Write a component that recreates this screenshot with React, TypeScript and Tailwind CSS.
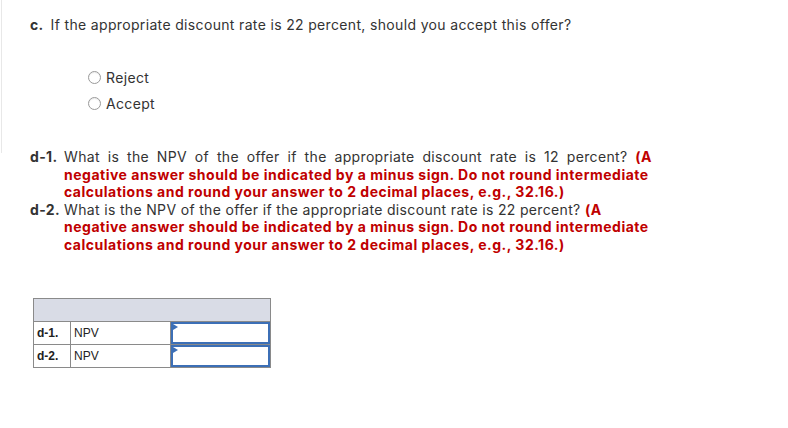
const Radio = ({ label }: { label: string }) => (
  <label className="flex items-center h-[26px] gap-[5px]">
    <span className="w-[13px] h-[13px] rounded-full border border-[#9a9a9a] bg-white shadow-[inset_0_1px_1px_rgba(0,0,0,0.08)]" />
    <span className="text-[14px] text-[#333]">{label}</span>
  </label>
);

const Red = ({ children }: { children: React.ReactNode }) => (
  <span className="font-bold tracking-[0.5px] text-[#c00000]">{children}</span>
);

const InputCell = () => (
  <td className="w-[100px] border border-[#8a8a8a] p-0">
    <div className="relative h-[22px] border-2 border-[#3c6fb6] bg-white">
      <span className="absolute left-0 top-0 w-0 h-0 border-y-[3px] border-y-transparent border-l-[5px] border-l-[#3c6fb6]" />
    </div>
  </td>
);

export default function App() {
  return (
    <div className="w-[788px] h-[428px] bg-white flex font-['Inter',sans-serif] tracking-[0.34px] text-[#333]">
      <div className="w-[2px] h-[153px] border-r border-[#e8e8e8]" />
      <div className="flex-1 pl-[28px] pt-[15px]">
        <p className="text-[14px] leading-[20px]">
          <span className="font-bold">c.</span>
          <span className="ml-[7px]">If the appropriate discount rate is 22 percent, should you accept this offer?</span>
        </p>

        <div className="mt-[29px] ml-[58px] flex flex-col">
          <Radio label="Reject" />
          <Radio label="Accept" />
        </div>

        <div className="mt-[32px] text-[14px] leading-[17.6px]">
          <div className="flex">
            <span className="w-[34px] font-bold">d-1.</span>
            <div className="w-[588px]">
              <div className="text-justify [text-align-last:justify]">
                What is the NPV of the offer if the appropriate discount rate is 12 percent? <Red>(A</Red>
              </div>
              <div><Red>negative answer should be indicated by a minus sign. Do not round intermediate</Red></div>
              <div><Red>calculations and round your answer to 2 decimal places, e.g., 32.16.)</Red></div>
            </div>
          </div>
          <div className="flex">
            <span className="w-[34px] font-bold">d-2.</span>
            <div className="w-[588px]">
              <div>
                What is the NPV of the offer if the appropriate discount rate is 22 percent? <Red>(A</Red>
              </div>
              <div><Red>negative answer should be indicated by a minus sign. Do not round intermediate</Red></div>
              <div><Red>calculations and round your answer to 2 decimal places, e.g., 32.16.)</Red></div>
            </div>
          </div>
        </div>

        <table className="mt-[44px] ml-[3px] border-collapse border border-[#8a8a8a] font-['Liberation_Sans',Arial,sans-serif] tracking-normal text-[12px] text-[#222]">
          <thead>
            <tr className="h-[23px] bg-[#d9dce6]">
              <th colSpan={3} className="border border-[#8a8a8a]" />
            </tr>
          </thead>
          <tbody>
            <tr className="h-[23px]">
              <td className="w-[37px] border border-[#8a8a8a] px-[3px] font-bold">d-1.</td>
              <td className="w-[100px] border border-[#8a8a8a] px-[3px]">NPV</td>
              <InputCell />
            </tr>
            <tr className="h-[23px]">
              <td className="w-[37px] border border-[#8a8a8a] px-[3px] font-bold">d-2.</td>
              <td className="w-[100px] border border-[#8a8a8a] px-[3px]">NPV</td>
              <InputCell />
            </tr>
          </tbody>
        </table>
      </div>
    </div>
  );
}
